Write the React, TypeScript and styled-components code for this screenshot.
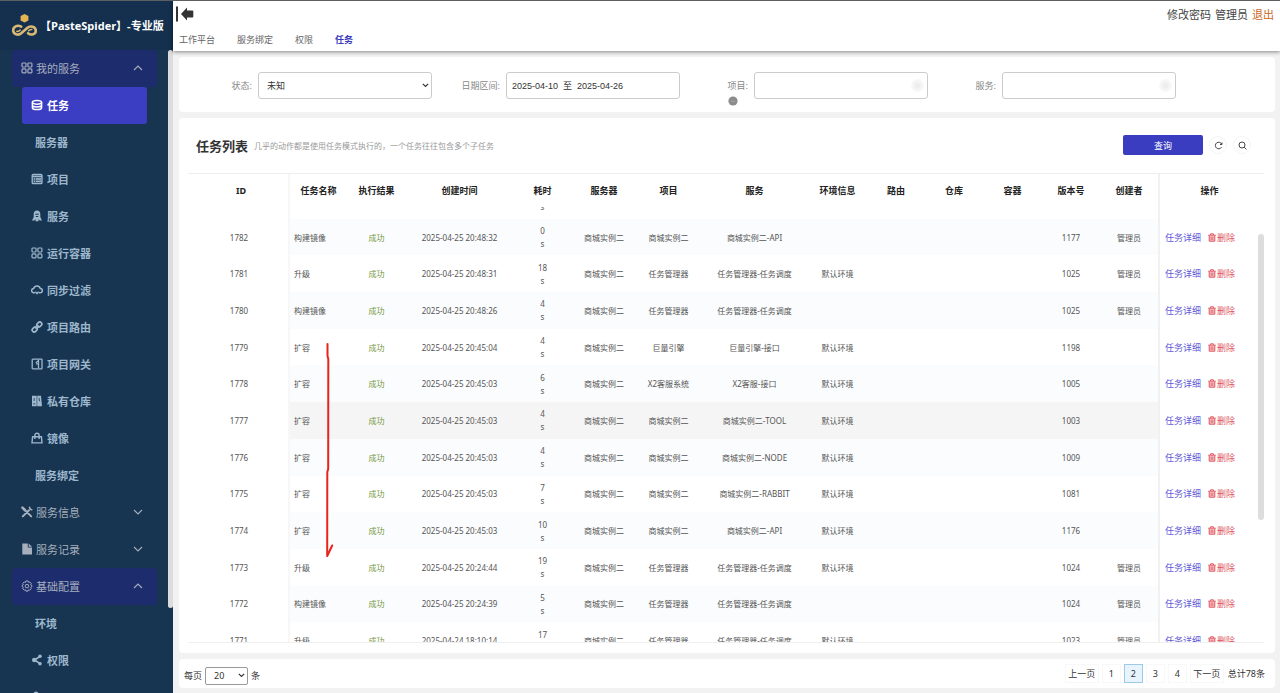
import React, { useLayoutEffect, useRef } from "react";
import styled, { createGlobalStyle, css } from "styled-components";

const Global = createGlobalStyle`
  * { box-sizing: border-box; }
  body {
    margin: 0;
    background: #f2f2f2;
    color: #333;
    font-family: "Noto Sans", "Noto Sans CJK SC", sans-serif;
    font-size: 9px;
  }
  a { text-decoration: none; color: inherit; }
  button, input, select { font-family: inherit; font-size: inherit; color: inherit; }
`;

const Shell = styled.div`
  display: flex;
  height: 100vh;
  overflow: hidden;
  border-top: 1px solid #5c5f62;
`;

/* ---------- sidebar ---------- */

const Sidebar = styled.aside`
  position: relative;
  flex: 0 0 173px;
  overflow: hidden;
  background: #173450;
`;

const Brand = styled.div`
  display: flex;
  align-items: center;
  gap: 2px;
  height: 49px;
  padding: 0 0 2px 11px;
  background: #14304e;
  color: #fff;
  font-family: "Open Sans", "Noto Sans CJK SC", sans-serif;
  font-size: 11px;
  font-weight: 700;
  white-space: nowrap;
`;

const Nav = styled.nav`
  display: flex;
  flex-direction: column;
`;

const GroupButton = styled.button<{ $open?: boolean }>`
  display: flex;
  align-items: center;
  gap: 3px;
  height: 37px;
  margin: 0 16px 0 12px;
  padding: 0 14px 1px 9px;
  border: 0;
  border-radius: 4px;
  background: ${(p) => (p.$open ? "#1d2c6d" : "transparent")};
  color: #a5afbd;
  font-size: 11px;
  text-align: left;
`;

const GroupLabel = styled.span`
  flex: 1;
`;

const MenuLink = styled.a<{ $active?: boolean; $plain?: boolean }>`
  display: flex;
  align-items: center;
  gap: 4px;
  height: 37px;
  margin: 0 26px 0 22px;
  padding: 0 0 1px ${(p) => (p.$plain ? "13px" : "9px")};
  border-radius: 3px;
  background: ${(p) => (p.$active ? "#3b3ec2" : "transparent")};
  color: ${(p) => (p.$active ? "#fff" : "#9db7cd")};
  font-size: 11px;
  font-weight: 700;
`;

const SideThumb = styled.div`
  position: absolute;
  top: 49px;
  right: 0;
  width: 5px;
  height: 558px;
  border-radius: 3px;
  background: #dcdcdc;
`;

/* ---------- main ---------- */

const Main = styled.main`
  display: flex;
  flex: 1;
  flex-direction: column;
  min-width: 0;
`;

const TopBar = styled.header`
  z-index: 1;
  display: flex;
  flex-direction: column;
  height: 50px;
  padding: 3px 6px 0 3px;
  background: #fff;
  box-shadow: 0 1px 4px rgba(0, 0, 0, 0.45);
`;

const TopRow = styled.div`
  display: flex;
  align-items: center;
  justify-content: space-between;
  height: 20px;
`;

const IconButton = styled.button`
  display: flex;
  padding: 0;
  border: 0;
  background: none;
`;

const Account = styled.div`
  display: flex;
  gap: 4px;
  color: #444;
  font-size: 11px;
`;

const Logout = styled.a`
  color: #c8661e;
`;

const Tabs = styled.nav`
  display: flex;
  gap: 22px;
  align-items: center;
  height: 25px;
  padding: 6px 0 0 3px;
`;

const Tab = styled.a<{ $active?: boolean }>`
  color: ${(p) => (p.$active ? "#3b3bbd" : "#666")};
  font-weight: ${(p) => (p.$active ? 700 : 400)};
  font-size: 9px;
`;

const Content = styled.div`
  display: flex;
  flex: 1;
  flex-direction: column;
  gap: 6px;
  min-height: 0;
  padding: 6px 5px 5px 6px;
`;

const Panel = styled.section`
  border-radius: 4px;
  background: #fff;
`;

const Filters = styled(Panel)`
  display: grid;
  grid-template-columns: repeat(4, minmax(0, 248px));
  height: 55px;
  padding: 15px 5px 0;
`;

const Field = styled.div`
  display: grid;
  grid-template-columns: 68px 1fr;
  column-gap: 6px;
  align-items: center;
  height: 27px;
`;

const FieldLabel = styled.label`
  position: relative;
  justify-self: end;
  color: #888;
`;

const HelpDot = styled.span`
  position: absolute;
  top: 17px;
  left: 0;
  display: flex;
`;

const control = css`
  width: 100%;
  height: 27px;
  border: 1px solid #ccc;
  border-radius: 3px;
  background: #fff;
  color: #333;
  font-size: 9px;
`;

const SelectBox = styled.div`
  position: relative;
  display: flex;
`;

const SelectArrow = styled.span`
  position: absolute;
  top: 0;
  bottom: 0;
  right: 3px;
  display: flex;
  align-items: center;
  color: #333;
  pointer-events: none;
`;

const Select = styled.select`
  ${control}
  appearance: none;
  padding: 0 8px;
`;

const Input = styled.input`
  ${control}
  padding: 0 5px;
  font-family: "Liberation Sans", "Noto Sans CJK SC", sans-serif;
`;

const ClearableBox = styled.div`
  position: relative;
`;

const ClearButton = styled.button`
  position: absolute;
  top: 7px;
  right: 4px;
  width: 13px;
  height: 13px;
  padding: 0;
  border: 0;
  border-radius: 50%;
  background: radial-gradient(#ececec 10%, #f6f6f6 50%, #fafafa 100%);
`;

const ListPanel = styled(Panel)`
  display: flex;
  flex: 1;
  flex-direction: column;
  min-height: 0;
  padding: 0 11px 10px 9px;
`;

const ListHead = styled.div`
  display: flex;
  align-items: center;
  height: 55px;
  padding: 0 13px 1px 8px;
`;

const Title = styled.h2`
  margin: 0 6px 0 0;
  color: #333;
  font-size: 13px;
  font-weight: 700;
`;

const Hint = styled.p`
  flex: 1;
  margin: 0;
  color: #999;
  font-size: 8px;
`;

const QueryButton = styled.button`
  width: 80px;
  height: 20px;
  border: 0;
  border-radius: 2px;
  background: #3a3dc0;
  color: #fff;
  font-size: 9px;
`;

const RoundButton = styled.button`
  display: flex;
  align-items: center;
  justify-content: center;
  width: 18px;
  height: 18px;
  margin-left: 6px;
  padding: 0;
  border: 1px solid #f5f5f5;
  border-radius: 50%;
  background: #fff;
`;

const TableFrame = styled.div`
  position: relative;
  flex: 1;
  min-height: 0;
  padding-right: 5px;
  border-top: 1px solid #eee;
  border-bottom: 1px solid #f0f0f0;
`;

const Scroller = styled.div`
  height: 100%;
  overflow: hidden;
`;

const Thumb = styled.div`
  position: absolute;
  top: 60px;
  right: 0;
  width: 6px;
  height: 286px;
  border-radius: 3px;
  background: #ddd;
`;

const Mark = styled.svg`
  position: absolute;
  top: 168px;
  left: 136px;
`;

const Table = styled.table`
  width: 100%;
  height: 510px;
  table-layout: fixed;
  border-collapse: separate;
  border-spacing: 0;
  text-align: center;

  thead th {
    position: sticky;
    top: 0;
    z-index: 1;
    height: 33px;
    padding: 0;
    background: #fff;
    color: #222;
    font-size: 9px;
    font-weight: 700;
  }
  tr > :first-child {
    padding-left: 6px;
    border-right: 2px solid #f7f7f7;
  }
  tr > :last-child {
    border-left: 2px solid #f1f1f1;
  }
`;

const Row = styled.tr<{ $striped?: boolean; $hover?: boolean }>`
  background: ${(p) => (p.$hover ? "#f5f5f5" : p.$striped ? "#fafcfd" : "#fff")};
`;

const Cell = styled.td<{ $left?: boolean; $fixed?: boolean }>`
  padding: 4px;
  ${(p) => p.$left && "text-align: left;"}
  ${(p) => p.$fixed && "background: #fff;"}
  color: #555;
  font-size: 8px;
  line-height: 13px;
  white-space: nowrap;
`;

const Success = styled.span`
  color: #76993f;
`;

const Duration = styled.span`
  display: flex;
  flex-direction: column;
`;

const Actions = styled.div`
  display: flex;
  align-items: center;
  gap: 7px;
  padding-left: 1px;
  font-size: 9px;
`;

const DetailLink = styled.a`
  color: #6259d6;
`;

const DeleteLink = styled.a`
  display: flex;
  align-items: center;
  gap: 1px;
  color: #e05561;
`;

const Footer = styled(Panel)`
  display: flex;
  align-items: center;
  justify-content: space-between;
  height: 29px;
  padding: 0 10px 0 5px;
`;

const PageSize = styled.label`
  display: flex;
  align-items: center;
  gap: 3px;
  padding-top: 4px;
`;

const SizeSelect = styled.select`
  appearance: none;
  width: 43px;
  height: 18px;
  padding: 0 8px;
  border: 1px solid #999;
  border-radius: 2px;
  background: #fff;
`;

const Pager = styled.nav`
  display: flex;
  align-items: center;
  gap: 3px;
`;

const PageButton = styled.button<{ $wide?: boolean; $current?: boolean }>`
  width: ${(p) => (p.$wide ? "34px" : "19px")};
  height: 19px;
  padding: 0;
  border: 1px solid ${(p) => (p.$current ? "#9ccbe8" : "#f8f8f8")};
  background: ${(p) => (p.$current ? "#e8f4fd" : "#fff")};
  white-space: nowrap;
`;

const Total = styled.span`
  margin-left: 1px;
`;

/* ---------- drawings ---------- */

const Logo = () => (
  <svg width="27" height="24" viewBox="0 0 27 24" fill="none">
    <path d="M13.500 1l3.900 2.100v4.300l-3.900 2.200-3.900-2.200V3.100z" fill="#e3b456" />
    <g stroke="#d8b873" strokeLinecap="round">
      <path d="M10.200 13.600C6 11.500 2.200 13.800 2.200 17.300c0 4 5 5.700 8.300 2.700l5.700-5c3.200-2.900 8.600-1.300 8.600 2.700 0 3.700-4.600 5-7.800 2.500" strokeWidth="2.600" />
      <path d="M5.800 18.200c1.300.6 2.400 0 3.400-1.100M20.800 16.600c-1.200-.4-2.200.2-3.200 1.200" strokeWidth="1.500" />
    </g>
  </svg>
);

const Chevron = ({ up }: { up?: boolean }) => (
  <svg width="10" height="6" viewBox="0 0 10 6" fill="none" stroke="currentColor" strokeWidth="1.100">
    <path d={up ? "M1 5l4-4 4 4" : "M1 1l4 4 4-4"} />
  </svg>
);

const SmallChevron = () => (
  <svg width="7" height="5" viewBox="0 0 7 5" fill="none" stroke="currentColor" strokeWidth="1.200">
    <path d="M.8.8l2.700 2.700L6.200.8" />
  </svg>
);

type IconName =
  | "grid" | "db" | "list" | "rocket" | "cloud" | "link" | "gateway"
  | "books" | "bag" | "tools" | "file" | "gear" | "share" | "user";

const shapes: Record<IconName, React.ReactNode> = {
  grid: (
    <g fill="none" stroke="currentColor" strokeWidth="1.200">
      <rect x="1" y="1" width="4" height="4" rx=".8" />
      <rect x="6.900" y="1" width="4" height="4" rx=".8" />
      <rect x="1" y="6.900" width="4" height="4" rx="1" />
      <rect x="6.900" y="6.900" width="4" height="4" rx="1" />
    </g>
  ),
  db: (
    <g fill="none" stroke="currentColor" strokeWidth="1.500">
      <ellipse cx="6" cy="3.300" rx="4.600" ry="1.900" />
      <path d="M1.400 3.300v5.400c0 1 2 1.900 4.600 1.900s4.600-.9 4.600-1.900V3.300M1.400 6c0 1 2 1.900 4.600 1.900s4.600-.9 4.600-1.900" />
    </g>
  ),
  list: (
    <g fill="none" stroke="currentColor" strokeWidth="1.300">
      <rect x="1.200" y="1.300" width="9.800" height="9.400" rx="1" fill="currentColor" fillOpacity=".35" />
      <path d="M1 3.400h10M3 6h1M5 6h5M3 8.400h1M5 8.400h5" />
    </g>
  ),
  rocket: (
    <>
      <path d="M6 .6c2 0 3.300 1.500 3.300 3.400V7L11 10.600H8.600L7.500 9v2.200h-3V9l-1.100 1.600H1L2.700 7V4C2.700 2.100 4 .6 6 .6z" fill="currentColor" />
      <path d="M4.300 4.200h3.400M4.800 6.500h2.400" stroke="#173450" strokeWidth="1" />
    </>
  ),
  cloud: (
    <g fill="none" stroke="currentColor" strokeWidth="1.500">
      <path d="M4.200 8.800H3a2.200 2.200 0 01-.3-4.400 3.500 3.500 0 016.600 0A2.200 2.200 0 019 8.800H7.800" />
      <path d="M4.400 7.600L6 9.600l1.600-2" strokeWidth="1.300" />
    </g>
  ),
  link: (
    <g fill="none" stroke="currentColor" strokeWidth="1.700">
      <rect x="5.600" y="1.500" width="5.400" height="4" rx="2" transform="rotate(-45 8.300 3.500)" />
      <rect x="1" y="6.500" width="5.400" height="4" rx="2" transform="rotate(-45 3.700 8.500)" />
      <path d="M4.400 7.600l3.200-3.200" />
    </g>
  ),
  gateway: (
    <g fill="none" stroke="currentColor" strokeWidth="1.300">
      <rect x="1.200" y="1.200" width="9.800" height="9.600" rx=".6" />
      <path d="M7.500 10V2.500M4.800 4.800L7.500 2.600v3.200H5" />
    </g>
  ),
  books: (
    <>
      <path d="M1 .8h4.700v10.400H1zM6.200 .8h3.800L11 11.200H6.200z" fill="currentColor" />
      <path d="M3.200 3v3M8 2.800l.5 3.400M2.200 8.800h2" stroke="#173450" strokeWidth=".8" />
    </>
  ),
  bag: (
    <g fill="none" stroke="currentColor" strokeWidth="1.400">
      <path d="M1.600 4.800h8.800l.6 6.100H1z" />
      <path d="M3.900 7V3.300a2.100 2.100 0 014.200 0V7" />
    </g>
  ),
  tools: (
    <g fill="none" stroke="currentColor" strokeWidth="2" strokeLinecap="round">
      <path d="M1.800 10.400L8 4.200M3.600 3.800l6.600 6.600" />
      <path d="M1.500 1.700l2.300 2.300" strokeWidth="2.600" />
      <path d="M8.600 1.200a2.300 2.300 0 002.200 2.500" strokeWidth="1.600" />
    </g>
  ),
  file: <path d="M1.300.6h5.500v3.900H11v6.900H1.300zM7.700.6L11 3.800H7.700z" fill="currentColor" />,
  gear: (
    <g fill="none" stroke="currentColor" strokeWidth="1">
      <path d="M4.900 1h2.200l.4 1.300 1.300-.3 1.500 1.600-.6 1.200 1.200.8v1l-1.200.9.500 1.200-1.500 1.500-1.200-.4-.5 1.300H5l-.5-1.300-1.200.4-1.500-1.500.5-1.200-1.200-.9v-1l1.200-.8-.6-1.200L3.200 2l1.300.3z" />
      <circle cx="6" cy="6.100" r="1.800" />
    </g>
  ),
  share: (
    <>
      <path d="M9 2.400L3.600 6 9 9.600" fill="none" stroke="currentColor" strokeWidth="1.700" />
      <circle cx="9" cy="2.300" r="1.800" fill="currentColor" />
      <circle cx="3.200" cy="6" r="2.200" fill="currentColor" />
      <circle cx="9" cy="9.700" r="1.800" fill="currentColor" />
    </>
  ),
  user: (
    <g fill="currentColor">
      <circle cx="5" cy="3" r="2.600" />
      <path d="M.6 12c0-3 2-5 4.400-5s4.400 2 4.400 5z" />
    </g>
  ),
};

const Icon = ({ name }: { name: IconName }) => (
  <svg width="12" height="12" viewBox="0 0 12 12" aria-hidden="true">
    {shapes[name]}
  </svg>
);

const BackArrow = () => (
  <svg width="18" height="16" viewBox="0 0 18 16" fill="#333">
    <path d="M0 .5h2v15H0zM5 8l6-6.500V4.500h5.500c.5 0 .8.300.8.800v5.400c0 .5-.3.800-.8.800H11v3z" />
  </svg>
);

const Trash = () => (
  <svg width="8" height="9" viewBox="0 0 8 9" fill="none" stroke="currentColor">
    <path d="M.2 2.200h7.600M2.600 2V.8h2.800V2" strokeWidth="1" />
    <path d="M1.200 2.600v5.600h5.600V2.600" fill="currentColor" fillOpacity=".35" strokeWidth="1" />
    <path d="M3.200 3.600v3.400M4.800 3.600v3.400" strokeWidth=".8" />
  </svg>
);

/* ---------- data ---------- */

const serviceItems: { label: string; icon?: IconName; active?: boolean }[] = [
  { label: "任务", icon: "db", active: true },
  { label: "服务器" },
  { label: "项目", icon: "list" },
  { label: "服务", icon: "rocket" },
  { label: "运行容器", icon: "grid" },
  { label: "同步过滤", icon: "cloud" },
  { label: "项目路由", icon: "link" },
  { label: "项目网关", icon: "gateway" },
  { label: "私有仓库", icon: "books" },
  { label: "镜像", icon: "bag" },
  { label: "服务绑定" },
];

const columns: [string, number][] = [
  ["ID", 102], ["任务名称", 57], ["执行结果", 59], ["创建时间", 107], ["耗时", 59],
  ["服务器", 64], ["项目", 65], ["服务", 107], ["环境信息", 59], ["路由", 58],
  ["仓库", 58], ["容器", 59], ["版本号", 58], ["创建者", 58], ["操作", 101],
];

const E = "默认环境";
const M = "管理员";
const S = "商城实例二";
const T = "任务管理器";

type Task = [id: number, name: string, time: string, cost: number, project: string, service: string, env: string, version: number, owner: string];

const tasks: Task[] = [
  [1782, "构建镜像", "2025-04-25 20:48:32", 0, S, S + "-API", "", 1177, M],
  [1781, "升级", "2025-04-25 20:48:31", 18, T, T + "-任务调度", E, 1025, M],
  [1780, "构建镜像", "2025-04-25 20:48:26", 4, T, T + "-任务调度", "", 1025, M],
  [1779, "扩容", "2025-04-25 20:45:04", 4, "巨量引擎", "巨量引擎-接口", E, 1198, ""],
  [1778, "扩容", "2025-04-25 20:45:03", 6, "X2客服系统", "X2客服-接口", E, 1005, ""],
  [1777, "扩容", "2025-04-25 20:45:03", 4, S, S + "-TOOL", E, 1003, ""],
  [1776, "扩容", "2025-04-25 20:45:03", 4, S, S + "-NODE", E, 1009, ""],
  [1775, "扩容", "2025-04-25 20:45:03", 7, S, S + "-RABBIT", E, 1081, ""],
  [1774, "扩容", "2025-04-25 20:45:03", 10, S, S + "-API", E, 1176, ""],
  [1773, "升级", "2025-04-25 20:24:44", 19, T, T + "-任务调度", E, 1024, M],
  [1772, "构建镜像", "2025-04-25 20:24:39", 5, T, T + "-任务调度", "", 1024, M],
  [1771, "升级", "2025-04-24 18:10:14", 17, T, T + "-任务调度", E, 1023, M],
];

const TaskRow = ({ task, striped }: { task: Task; striped: boolean }) => {
  const [id, name, time, cost, project, service, env, version, owner] = task;
  return (
    <Row $striped={striped} $hover={id === 1777}>
      <Cell $fixed>{id}</Cell>
      <Cell $left>{name}</Cell>
      <Cell><Success>成功</Success></Cell>
      <Cell>{time}</Cell>
      <Cell><Duration><span>{cost}</span><span>s</span></Duration></Cell>
      <Cell>{S}</Cell>
      <Cell>{project}</Cell>
      <Cell>{service}</Cell>
      <Cell>{env}</Cell>
      <Cell /><Cell /><Cell />
      <Cell>{version}</Cell>
      <Cell>{owner}</Cell>
      <Cell $left $fixed>
        <Actions>
          <DetailLink href="#detail">任务详细</DetailLink>
          <DeleteLink href="#delete"><Trash />删除</DeleteLink>
        </Actions>
      </Cell>
    </Row>
  );
};

export default function App() {
  const scroller = useRef<HTMLDivElement>(null);

  useLayoutEffect(() => {
    if (scroller.current) scroller.current.scrollTop = 25;
  }, []);

  return (
    <>
      <Global />
      <Shell>
        <Sidebar>
          <Brand>
            <Logo />
            <span>【PasteSpider】-专业版</span>
          </Brand>
          <Nav>
            <GroupButton $open><Icon name="grid" /><GroupLabel>我的服务</GroupLabel><Chevron up /></GroupButton>
            {serviceItems.map((item) => (
              <MenuLink key={item.label} href="#menu" $active={item.active} $plain={!item.icon}>
                {item.icon && <Icon name={item.icon} />}
                {item.label}
              </MenuLink>
            ))}
            <GroupButton><Icon name="tools" /><GroupLabel>服务信息</GroupLabel><Chevron /></GroupButton>
            <GroupButton><Icon name="file" /><GroupLabel>服务记录</GroupLabel><Chevron /></GroupButton>
            <GroupButton $open><Icon name="gear" /><GroupLabel>基础配置</GroupLabel><Chevron up /></GroupButton>
            <MenuLink href="#env" $plain>环境</MenuLink>
            <MenuLink href="#auth"><Icon name="share" />权限</MenuLink>
            <MenuLink href="#user"><Icon name="user" /></MenuLink>
          </Nav>
          <SideThumb />
        </Sidebar>

        <Main>
          <TopBar>
            <TopRow>
              <IconButton aria-label="收起"><BackArrow /></IconButton>
              <Account>
                <a href="#password">修改密码</a>
                <span>管理员</span>
                <Logout href="#logout">退出</Logout>
              </Account>
            </TopRow>
            <Tabs>
              <Tab href="#home">工作平台</Tab>
              <Tab href="#bind">服务绑定</Tab>
              <Tab href="#auth">权限</Tab>
              <Tab href="#task" $active>任务</Tab>
            </Tabs>
          </TopBar>

          <Content>
            <Filters>
              <Field>
                <FieldLabel htmlFor="state">状态:</FieldLabel>
                <SelectBox>
                  <Select id="state"><option>未知</option></Select>
                  <SelectArrow><SmallChevron /></SelectArrow>
                </SelectBox>
              </Field>
              <Field>
                <FieldLabel htmlFor="range">日期区间:</FieldLabel>
                <Input id="range" defaultValue="2025-04-10  至  2025-04-26" />
              </Field>
              <Field>
                <FieldLabel htmlFor="project">
                  项目:
                  <HelpDot>
                    <svg width="10" height="10" viewBox="0 0 10 10">
                      <circle cx="5" cy="5" r="4.600" fill="#8c8c8c" />
                      <path d="M3 4.500l2 1.500 2-1.500" stroke="#a5a5a5" fill="none" />
                    </svg>
                  </HelpDot>
                </FieldLabel>
                <ClearableBox><Input id="project" /><ClearButton aria-label="清除" /></ClearableBox>
              </Field>
              <Field>
                <FieldLabel htmlFor="service">服务:</FieldLabel>
                <ClearableBox><Input id="service" /><ClearButton aria-label="清除" /></ClearableBox>
              </Field>
            </Filters>

            <ListPanel>
              <ListHead>
                <Title>任务列表</Title>
                <Hint>几乎的动作都是使用任务模式执行的，一个任务往往包含多个子任务</Hint>
                <QueryButton>查询</QueryButton>
                <RoundButton aria-label="刷新">
                  <svg width="9" height="9" viewBox="0 0 9 9" fill="none" stroke="#444" strokeWidth="1">
                    <path d="M7.500 6.200A3.300 3.300 0 117.600 3M8 1.500v2H6" />
                  </svg>
                </RoundButton>
                <RoundButton aria-label="搜索">
                  <svg width="9" height="9" viewBox="0 0 9 9" fill="none" stroke="#444" strokeWidth="1">
                    <circle cx="4" cy="4" r="3" /><path d="M6.200 6.200L8.400 8.400" />
                  </svg>
                </RoundButton>
              </ListHead>

              <TableFrame>
                <Scroller ref={scroller}>
                  <Table>
                    <colgroup>
                      {columns.map(([label, width]) => <col key={label} width={width} />)}
                    </colgroup>
                    <thead>
                      <tr>{columns.map(([label]) => <th key={label}>{label}</th>)}</tr>
                    </thead>
                    <tbody>
                      <Row>
                        <Cell $fixed /><Cell /><Cell /><Cell />
                        <Cell><Duration><span>0</span><span>s</span></Duration></Cell>
                        <Cell /><Cell /><Cell /><Cell /><Cell />
                        <Cell /><Cell /><Cell /><Cell /><Cell $fixed />
                      </Row>
                      {tasks.map((task, i) => <TaskRow key={task[0]} task={task} striped={i % 2 === 0} />)}
                    </tbody>
                  </Table>
                </Scroller>
                <Thumb />
                <Mark width="12" height="218" viewBox="0 0 12 218" fill="none" stroke="#e8241c" strokeWidth="2" strokeLinecap="round" strokeLinejoin="round">
                  <path d="M3.500 2v12l.8 3-.1 110-.9 3-.1 84 5-10.500" />
                </Mark>
              </TableFrame>
            </ListPanel>

            <Footer>
              <PageSize>
                每页
                <SelectBox>
                  <SizeSelect><option>20</option></SizeSelect>
                  <SelectArrow><SmallChevron /></SelectArrow>
                </SelectBox>
                条
              </PageSize>
              <Pager>
                <PageButton $wide>上一页</PageButton>
                <PageButton>1</PageButton>
                <PageButton $current>2</PageButton>
                <PageButton>3</PageButton>
                <PageButton>4</PageButton>
                <PageButton $wide>下一页</PageButton>
                <Total>总计78条</Total>
              </Pager>
            </Footer>
          </Content>
        </Main>
      </Shell>
    </>
  );
}
